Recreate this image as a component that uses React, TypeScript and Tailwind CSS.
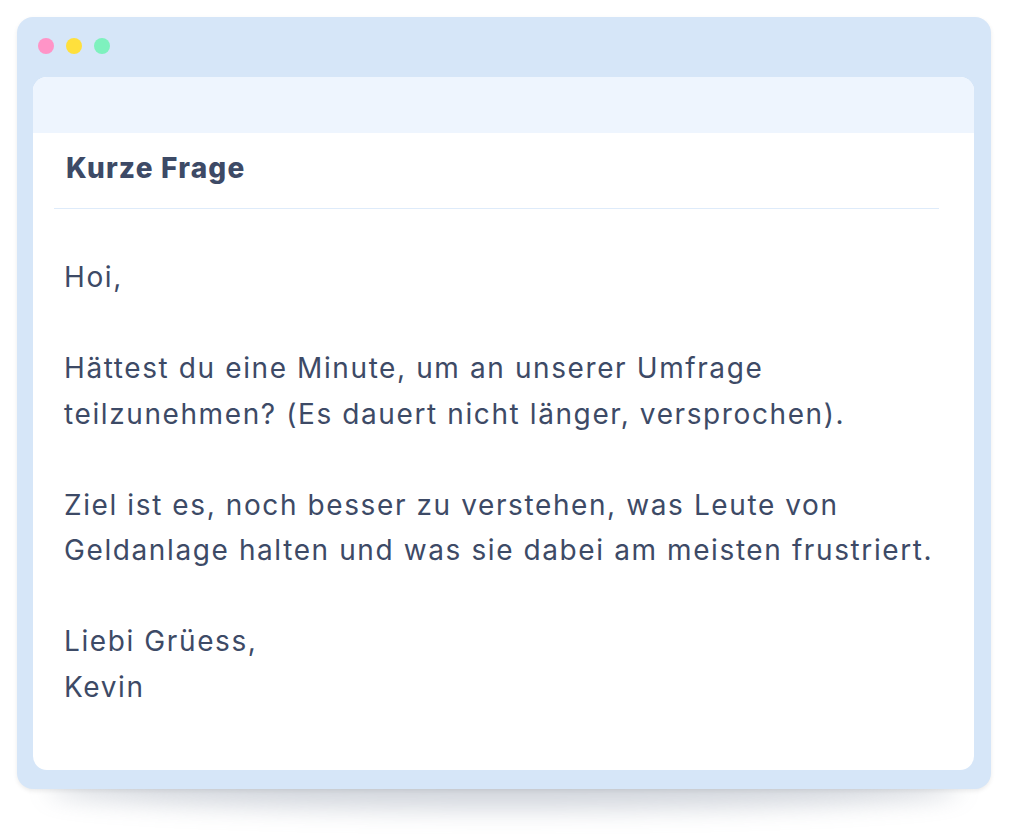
import React from "react";

export default function App() {
  const font = { fontFamily: "Inter, 'Noto Sans', sans-serif" };
  return (
    <div className="min-h-[834px] w-[1017px] bg-white pl-[17px] pt-[17px]" style={font}>
      <div className="relative w-[974px]">
        <div className="pointer-events-none absolute bottom-[-20px] left-[30px] right-[30px] h-[40px] rounded-[50%] bg-[#8f99aa] opacity-40 blur-[12px]" />
        <div className="relative flex flex-col rounded-[16px] bg-[#d6e6f8] px-4 pb-[19px] shadow-[0_2px_4px_rgba(0,0,0,0.08)]">
          <div className="flex h-[60px] items-start gap-3 pl-[5px] pt-[21px]">
            <span className="h-4 w-4 rounded-full bg-[#ff94c7]" />
            <span className="h-4 w-4 rounded-full bg-[#ffe03c]" />
            <span className="h-4 w-4 rounded-full bg-[#7ef1be]" />
          </div>
          <div className="mr-px overflow-hidden rounded-[14px] bg-white">
            <div className="h-[56px] bg-[#eef5fe]" />
            <div className="pl-[33px] pt-[15px] pb-[20px]">
              <h1 className="text-[28px] font-extrabold leading-[40px] tracking-[1.2px] text-[#3d4a66]">Kurze Frage</h1>
            </div>
            <div className="ml-[21px] mr-[35px] h-px bg-[#deebfa]" />
            <div className="whitespace-nowrap pb-[60px] pl-[31px] pt-[46px] text-[28px] leading-[45.5px] tracking-[1.6px] text-[#3d4a66]">
              <p>Hoi,</p>
              <p className="h-[45.5px]" />
              <p>Hättest du eine Minute, um an unserer Umfrage</p>
              <p>teilzunehmen? (Es dauert nicht länger, versprochen).</p>
              <p className="h-[45.5px]" />
              <p>Ziel ist es, noch besser zu verstehen, was Leute von</p>
              <p>Geldanlage halten und was sie dabei am meisten frustriert.</p>
              <p className="h-[45.5px]" />
              <p>Liebi Grüess,</p>
              <p>Kevin</p>
            </div>
          </div>
        </div>
      </div>
    </div>
  );
}
